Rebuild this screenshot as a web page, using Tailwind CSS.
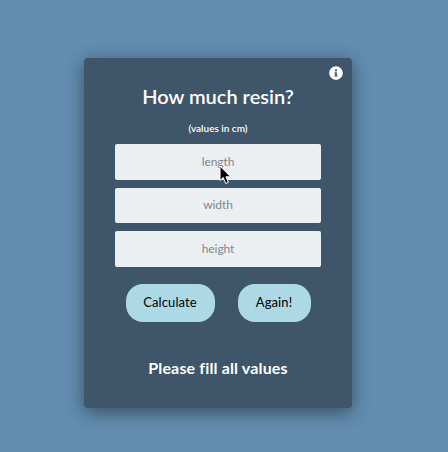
<!DOCTYPE html>
<html lang="en"><head><meta charset="utf-8"><title>How much resin?</title>
<script src="https://cdn.jsdelivr.net/npm/@tailwindcss/browser@4"></script></head>
<body class="bg-[#628db0] h-[452px] overflow-hidden font-[Lato,'Open_Sans',sans-serif]">
<main class="h-full flex justify-center pt-[58px] pr-3">
<section class="relative w-[268px] h-[350px] rounded-[4px] bg-[#3e556a] shadow-[0_4px_18px_rgba(0,0,0,0.45)] flex flex-col items-center text-white">
<svg class="absolute right-[9px] top-2 size-[14px]" viewBox="0 0 512 512" fill="white"><path d="M256 8C119 8 8 119 8 256s111 248 248 248 248-111 248-248S393 8 256 8zm0 110a42 42 0 1 1 0 84 42 42 0 0 1 0-84zm56 254a12 12 0 0 1-12 12h-88a12 12 0 0 1-12-12v-24a12 12 0 0 1 12-12h12v-64h-12a12 12 0 0 1-12-12v-24a12 12 0 0 1 12-12h64a12 12 0 0 1 12 12v100h12a12 12 0 0 1 12 12z"/></svg>
<h1 class="mt-[24px] h-7 leading-7 text-[20px] font-semibold whitespace-nowrap">How much resin?</h1>
<p class="mt-[11px] h-[14px] leading-[14px] text-[10px] font-semibold">(values in cm)</p>
<form class="mt-[9px] w-[206px] flex flex-col gap-2 text-[12px] tracking-[-0.1px] text-[#858688]">
<div class="h-[35.5px] bg-[#ebeff2] rounded-[2px] flex items-center justify-center">length</div>
<div class="h-[35.5px] bg-[#ebeff2] rounded-[2px] flex items-center justify-center">width</div>
<div class="h-[35.5px] bg-[#ebeff2] rounded-[2px] flex items-center justify-center">height</div>
</form>
<div class="mt-[17px] flex gap-[23px] text-[13px] tracking-[0.1px] text-black">
<button class="w-[89px] h-[38px] pt-px rounded-[17px] bg-[#add8e6]">Calculate</button>
<button class="w-[73px] h-[38px] pt-px rounded-[17px] bg-[#add8e6]">Again!</button>
</div>
<p class="mt-[34px] leading-6 text-[16px] tracking-[0.15px] font-bold whitespace-nowrap">Please fill all values</p>
</section></main>
<svg class="absolute left-[219px] top-[165px] w-[12px] h-[20px]" viewBox="0 0 12 20"><path d="M1 1v14.5l3.2-3 2.5 6 2.7-1.2-2.5-5.5H11.5z" fill="black" stroke="white"/></svg>
</body></html>
